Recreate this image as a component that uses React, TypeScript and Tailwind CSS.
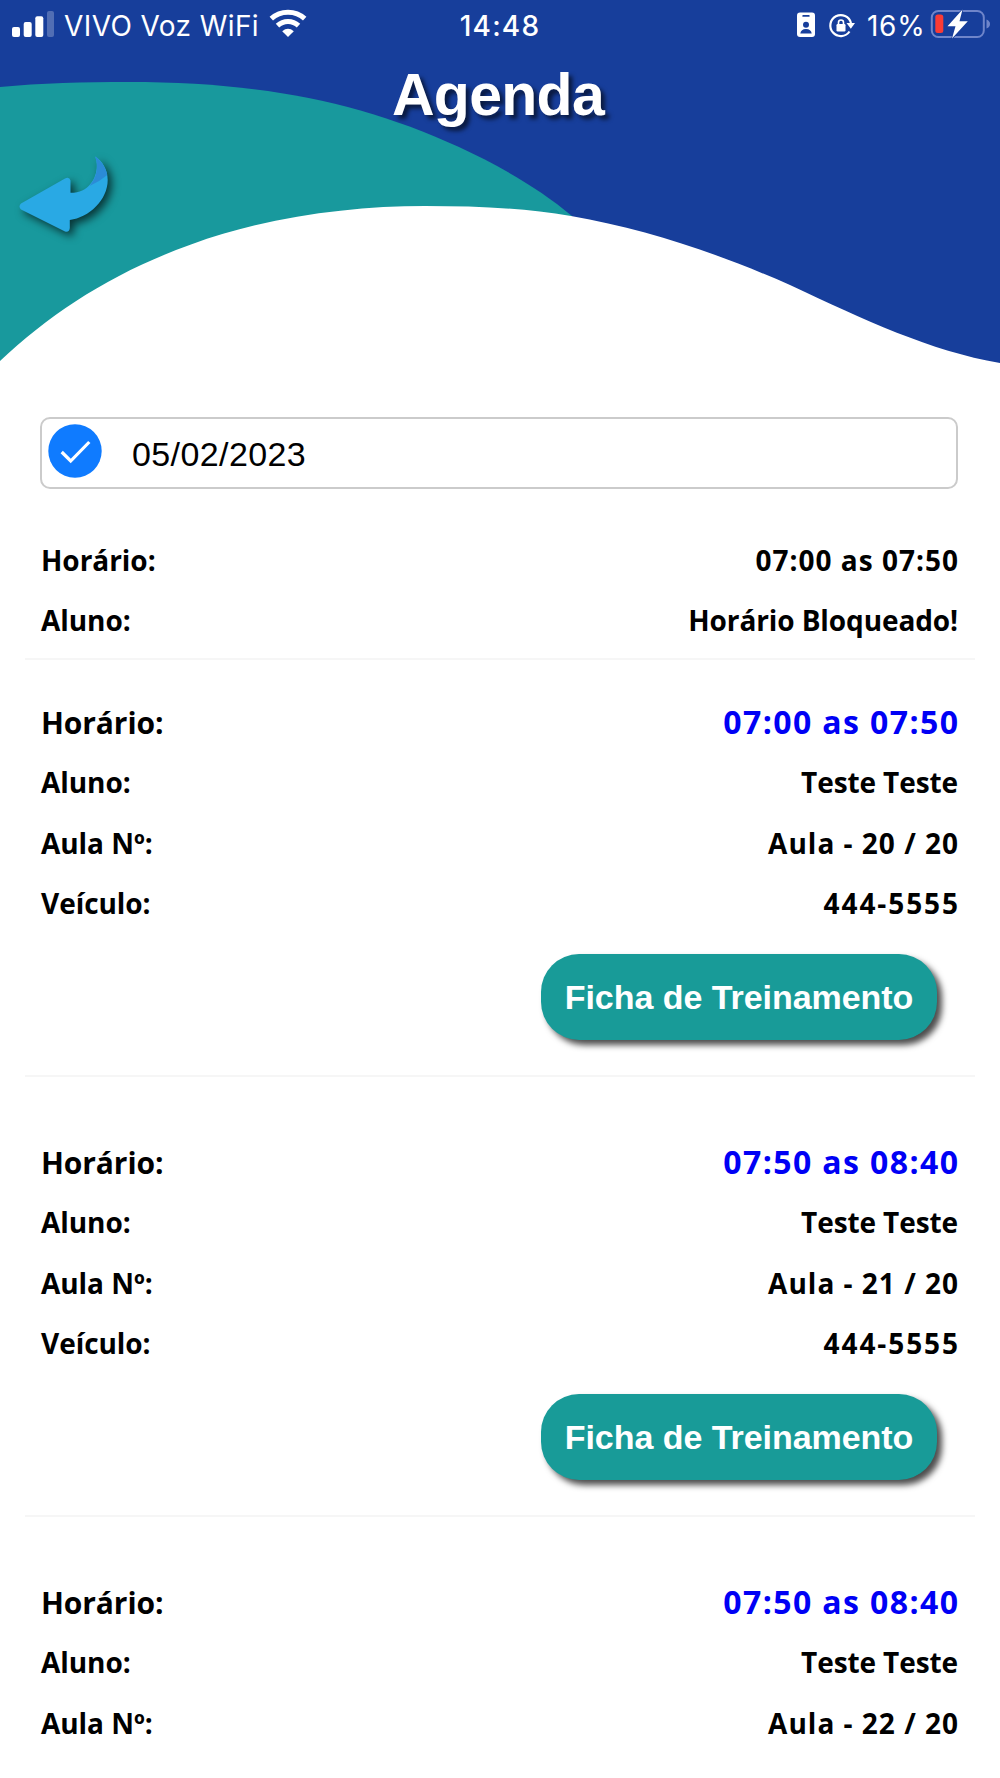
type Row = {
  label: string;
  value: string;
  fit: string;
  large?: boolean;
};

const DIGITS = "tracking-[1px] -mr-[1px]";
const LARGE_DIGITS = "tracking-[1.4px] -mr-[1.4px]";
const PLATE = "tracking-[1.9px] -mr-[1.9px]";
const PLAIN = "tracking-[-0.1px]";

const lesson = (time: string, lessonNumber: string, withVehicle = true): Row[] => [
  { label: "Horário:", value: time, fit: LARGE_DIGITS, large: true },
  { label: "Aluno:", value: "Teste Teste", fit: PLAIN },
  { label: "Aula Nº:", value: `Aula - ${lessonNumber} / 20`, fit: DIGITS },
  ...(withVehicle ? [{ label: "Veículo:", value: "444-5555", fit: PLATE }] : []),
];

function SignalIcon() {
  return (
    <svg width="42" height="52" viewBox="12 0 42 52" fill="#fff">
      <rect x="12" y="27" width="8" height="10" rx="2" />
      <rect x="23.7" y="22" width="8" height="15" rx="2" />
      <rect x="35.3" y="16.3" width="8" height="20.7" rx="2" />
      <rect x="47" y="11" width="7" height="26" rx="2" opacity=".25" />
    </svg>
  );
}

function WifiIcon() {
  return (
    <svg width="38" height="52" viewBox="269 0 38 52" fill="none" stroke="#fff" strokeWidth="5">
      <path d="M271.3 18.7C280.5 10.1 295.5 10.1 304.7 18.7" />
      <path d="M277.5 25.6C283.5 20 292.5 20 298.5 25.6" />
      <path d="M288 37L282.2 31.2Q288 26.5 293.8 31.2Z" fill="#fff" stroke="none" />
    </svg>
  );
}

function BadgeIcon() {
  return (
    <svg width="18" height="52" viewBox="797 0 18 52">
      <rect x="797" y="12.5" width="18" height="24.5" rx="3" fill="#fff" />
      <rect x="802.3" y="15" width="7.4" height="1.8" rx=".9" fill="#173e9b" />
      <circle cx="806" cy="24.8" r="3" fill="#173e9b" />
      <path d="M800.3 33.5Q801 28.9 806 28.9Q811 28.9 811.7 33.5Z" fill="#173e9b" />
    </svg>
  );
}

function RotationLockIcon() {
  return (
    <svg width="27" height="52" viewBox="828 0 27 52" fill="none" stroke="#fff">
      <path d="M849.5 31.5A10.5 10.5 0 1 1 851 23" strokeWidth="2.2" />
      <path d="M846.5 23H855L850.8 28.8Z" fill="#fff" stroke="none" />
      <rect x="836.5" y="24" width="9" height="7.5" rx="1.2" fill="#fff" stroke="none" />
      <path d="M838.5 24.5V22.5A2.5 2.5 0 0 1 843.5 22.5V24.5" strokeWidth="1.6" />
    </svg>
  );
}

function BatteryIcon() {
  return (
    <svg width="60" height="52" viewBox="930 0 60 52" fill="none">
      <rect x="931.8" y="11" width="52" height="26" rx="6.5" stroke="#6f85ca" strokeWidth="2" />
      <path d="M986.5 19.5Q990 21 990 24Q990 27 986.5 28.5Z" fill="#6f85ca" />
      <rect x="935.3" y="14.5" width="8" height="18.5" rx="2.5" fill="#fb3b35" />
      <path
        d="M962.5 9.5L947.5 26.200H955.5L952 38.5L967.8 21.200H959.5Z"
        fill="#fff"
        stroke="#173e9b"
        strokeWidth="1.5"
        paintOrder="stroke"
      />
    </svg>
  );
}

function BackArrow() {
  return (
    <svg
      width="94"
      height="84"
      viewBox="18 154 94 84"
      className="drop-shadow-[4px_4px_4px_rgba(0,0,0,0.65)]"
    >
      <path
        d="M22 203.5Q19 206.5 22 209.5L66 231.5Q70.5 232.5 70.8 228V220C90 217.5 108.7 200 108.7 180C108.7 169.5 103.5 161.5 96.2 156.5C101.5 170 94 193 71.5 192.800V180.5Q70.5 176.5 66 178.5Z"
        fill="#29a9e4"
      />
      <path
        d="M96.2 156.5C100 167 97.500 178 90.5 186Q100 182 108.3 175C106.500 167 102 160.500 96.200 156.500Z"
        fill="#2b8bd6"
      />
    </svg>
  );
}

function Header() {
  return (
    <header className="relative h-[364px] text-white">
      <svg className="absolute inset-0" width="1000" height="364" viewBox="0 0 1000 364">
        <rect width="1000" height="364" fill="#173e9b" />
        <path d="M0 87C40 83 85 82 128 82C262 82 361 102 459 147C500 166 540 189 572 216V364H0Z" fill="#18999d" />
        <path
          d="M0 361C52 312 114 272 191 244.5C266 217 350 206 425 206C478 206 525 208 571 216C645 229 715 252 790 285C865 320 930 351 1000 363V364H0Z"
          fill="#fff"
        />
      </svg>
      <div className="relative grid h-[52px] grid-cols-[1fr_auto_1fr] items-center font-[Inter,sans-serif] text-[28px] leading-[52px]">
        <div className="flex items-center pl-3">
          <SignalIcon />
          <span className="ml-[10px] w-[205px] tracking-[0.4px] whitespace-nowrap">VIVO Voz WiFi</span>
          <WifiIcon />
        </div>
        <span className="font-medium tracking-[1.2px]">14:48</span>
        <div className="flex items-center justify-end pr-[10px]">
          <BadgeIcon />
          <span className="w-[13px]" />
          <RotationLockIcon />
          <span className="ml-[12px] w-[63px] tracking-[0.7px]">16%</span>
          <BatteryIcon />
        </div>
      </div>
      <h1 className="relative mt-[9px] mr-[4px] text-center text-[59px] leading-[68px] font-bold tracking-[-0.7px] [text-shadow:4px_4px_4px_rgba(0,0,0,0.6)]">
        Agenda
      </h1>
      <button className="relative mt-[25px] ml-[17px] block" aria-label="Voltar">
        <BackArrow />
      </button>
    </header>
  );
}

function DateField() {
  return (
    <div className="mr-[42px] ml-[40px] mt-[53px] flex h-[72px] items-center rounded-[10px] border-2 border-[#cbcbcb] pl-[6px]">
      <svg width="54" height="54" viewBox="0 0 54 54" fill="none" className="mb-[5px]">
        <circle cx="27" cy="27" r="26.7" fill="#0f7bff" />
        <path d="M13.7 28L22.7 37L41.3 18" stroke="#fff" strokeWidth="3.2" />
      </svg>
      <span className="mt-[2px] ml-[30px] text-[34px] tracking-[0.4px]">05/02/2023</span>
    </div>
  );
}

function DetailRow({ label, value, fit, large }: Row) {
  return (
    <div className="flex h-[60.5px] items-baseline justify-between font-['Open_Sans',sans-serif] text-[28px] leading-[60.5px] font-bold">
      <span className={large ? "text-[30px] tracking-[-0.1px]" : "tracking-[-0.05px]"}>{label}</span>
      <span className={`${fit} ${large ? "text-[32px] text-[#0000f5]" : ""}`}>{value}</span>
    </div>
  );
}

function TrainingButton() {
  return (
    <button className="mt-[20.5px] mr-[21px] ml-auto block h-[86px] w-[396px] rounded-[38px] bg-[#189b98] pt-[1px] text-[34px] font-bold tracking-[-0.05px] text-white shadow-[5px_5px_6px_0px_rgba(0,0,0,0.7)]">
      Ficha de Treinamento
    </button>
  );
}

function Rows({ rows }: { rows: Row[] }) {
  return rows.map((row) => <DetailRow key={row.label} {...row} />);
}

export default function App() {
  return (
    <main className="h-[1778px] w-[1000px] overflow-hidden bg-white font-['Liberation_Sans',Arial,sans-serif] text-black">
      <Header />
      <DateField />
      <div className="mx-[25px] divide-y-2 divide-[#f6f6f6]">
        <section className="pt-[40.5px] pr-[17px] pb-[7.5px] pl-[16px]">
          <Rows
            rows={[
              { label: "Horário:", value: "07:00 as 07:50", fit: DIGITS },
              { label: "Aluno:", value: "Horário Bloqueado!", fit: PLAIN },
            ]}
          />
        </section>
        <section className="pt-[31.5px] pr-[17px] pb-[34.5px] pl-[16px]">
          <Rows rows={lesson("07:00 as 07:50", "20")} />
          <TrainingButton />
        </section>
        <section className="pt-[55px] pr-[17px] pb-[34.5px] pl-[16px]">
          <Rows rows={lesson("07:50 as 08:40", "21")} />
          <TrainingButton />
        </section>
        <section className="pt-[55px] pr-[17px] pl-[16px]">
          <Rows rows={lesson("07:50 as 08:40", "22", false)} />
        </section>
      </div>
    </main>
  );
}
